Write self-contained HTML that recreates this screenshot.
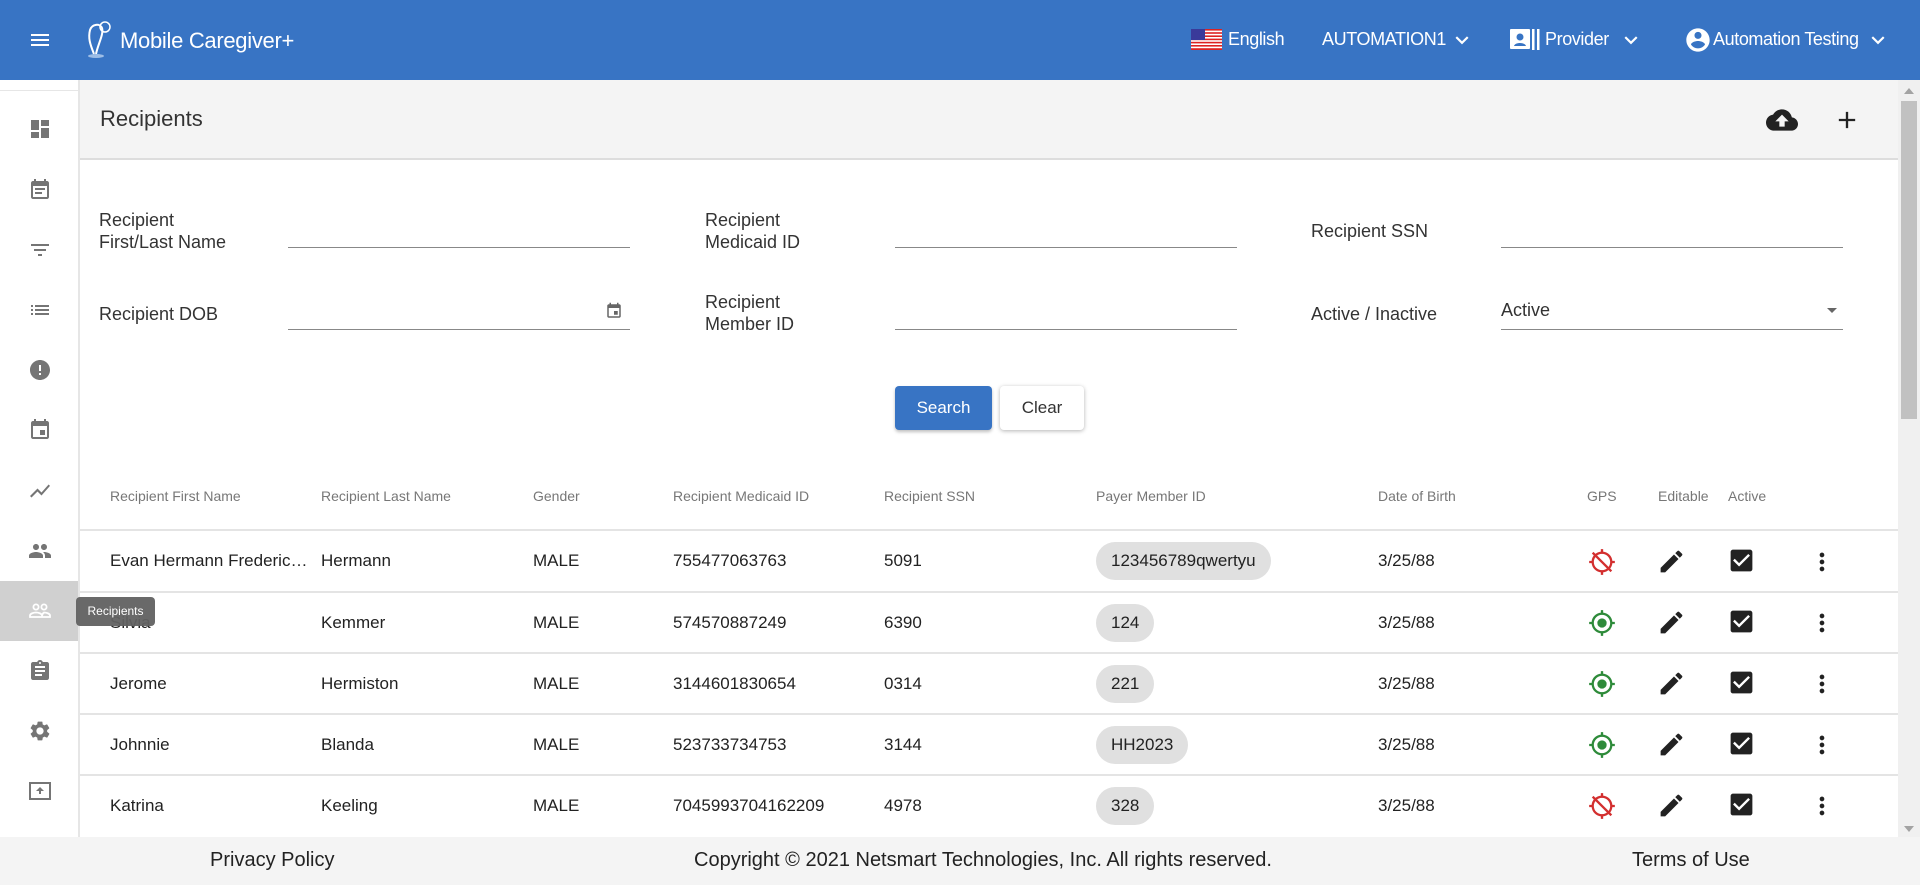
<!DOCTYPE html>
<html><head><meta charset="utf-8"><style>
*{box-sizing:border-box;margin:0;padding:0}
body{width:1920px;height:885px;overflow:hidden;font-family:"Liberation Sans",Arial,sans-serif;background:#fff;position:relative;color:#222}
.a{position:absolute;white-space:nowrap}
.hdr{left:0;top:0;width:1920px;height:80px;background:#3874c4}
.w{color:#fff;font-size:18px;letter-spacing:-0.4px}
.side{left:0;top:80px;width:80px;height:757px;background:#fff;border-right:2px solid #e6e6e6}
.si{position:absolute;left:28px;width:24px;height:24px}
.title{left:80px;top:80px;width:1818px;height:80px;background:#f4f4f4;border-bottom:2px solid #ddd}
.lbl{font-size:18px;color:#333;line-height:22px}
.ul{height:1px;background:#888}
.th{font-size:14px;color:#777;top:488px}
.td{font-size:17px;color:#222}
.line{left:80px;width:1818px;height:2px;background:#e4e4e4}
.chip{background:#e0e0e0;border-radius:19px;height:38px;padding:0 15px;line-height:38px;font-size:17px}
.foot{left:0;top:837px;width:1920px;height:48px;background:#f4f4f4;font-size:20px;color:#222}
</style></head><body>
<div class="a hdr"></div>
<svg class="a" style="left:28px;top:28px" width="24" height="24" viewBox="0 0 24 24"><path d="M3 18h18v-2H3v2zm0-5h18v-2H3v2zm0-7v2h18V6H3z" fill="#fff"/></svg>
<svg class="a" style="left:86px;top:20px" width="26" height="40" viewBox="0 0 26 40"><path d="M8 34 C4 24 2 18 4 10 C6 4 14 3 16 8 C18 14 12 24 10 34" fill="none" stroke="#fff" stroke-width="2"/><circle cx="19" cy="7" r="5" fill="none" stroke="#fff" stroke-width="1.5"/><ellipse cx="10" cy="36" rx="8" ry="2" fill="#9dbde6"/></svg>
<div class="a w" style="left:120px;top:28px;font-size:22px;letter-spacing:-0.3px">Mobile Caregiver+</div>
<svg class="a" style="left:1191px;top:29px" width="31" height="21" viewBox="0 0 31 21"><rect width="31" height="21" fill="#fff"/><g fill="#d22">
<rect y="0" width="31" height="1.6"/><rect y="3.2" width="31" height="1.6"/><rect y="6.4" width="31" height="1.6"/><rect y="9.6" width="31" height="1.6"/><rect y="12.8" width="31" height="1.6"/><rect y="16" width="31" height="1.6"/><rect y="19.2" width="31" height="1.8"/></g><rect width="14" height="11" fill="#3a3a9a"/></svg>
<div class="a w" style="left:1228px;top:29px">English</div>
<div class="a w" style="left:1322px;top:29px">AUTOMATION1</div>
<svg class="a" style="left:1449px;top:27px" width="26" height="26" viewBox="0 0 24 24"><path d="M7.4 8.6 12 13.2l4.6-4.6L18 10l-6 6-6-6z" fill="#fff"/></svg>
<svg class="a" style="left:1510px;top:29px" width="30" height="22" viewBox="0 0 30 22"><rect x="0" y="0" width="20" height="20" rx="1" fill="#fff"/><circle cx="10" cy="8" r="3.5" fill="#3874c4"/><path d="M4 17c1-4 11-4 12 0z" fill="#3874c4"/><rect x="22" y="0" width="2.5" height="21" fill="#fff"/><rect x="27" y="0" width="2.5" height="21" fill="#fff"/></svg>
<div class="a w" style="left:1545px;top:29px">Provider</div>
<svg class="a" style="left:1618px;top:27px" width="26" height="26" viewBox="0 0 24 24"><path d="M7.4 8.6 12 13.2l4.6-4.6L18 10l-6 6-6-6z" fill="#fff"/></svg>
<svg class="a" style="left:1684px;top:26px" width="28" height="28" viewBox="0 0 24 24"><path d="M12 2C6.5 2 2 6.5 2 12s4.5 10 10 10 10-4.5 10-10S17.5 2 12 2zm0 3c1.7 0 3 1.3 3 3s-1.3 3-3 3-3-1.3-3-3 1.3-3 3-3zm0 14.2c-2.5 0-4.7-1.3-6-3.2 0-2 4-3.1 6-3.1s6 1.1 6 3.1c-1.3 1.9-3.5 3.2-6 3.2z" fill="#fff"/></svg>
<div class="a w" style="left:1713px;top:29px">Automation Testing</div>
<svg class="a" style="left:1865px;top:27px" width="26" height="26" viewBox="0 0 24 24"><path d="M7.4 8.6 12 13.2l4.6-4.6L18 10l-6 6-6-6z" fill="#fff"/></svg>

<div class="a side"></div>
<div class="a" style="left:0;top:90px;width:78px;height:1px;background:#e6e6e6"></div>
<div class="a" style="left:0;top:581px;width:78px;height:60px;background:#d0d0d0"></div>
<svg class="si" style="top:117px" viewBox="0 0 24 24"><path d="M3 13h8V3H3v10zm0 8h8v-6H3v6zm10 0h8V11h-8v10zm0-18v6h8V3h-8z" fill="#757575"/></svg>
<svg class="si" style="top:178px" viewBox="0 0 24 24"><path d="M19 3h-1V1h-2v2H8V1H6v2H5c-1.1 0-2 .9-2 2v14c0 1.1.9 2 2 2h14c1.1 0 2-.9 2-2V5c0-1.1-.9-2-2-2zm0 16H5V8h14v11zM7 10h10v2H7zm0 4h7v2H7z" fill="#757575"/></svg>
<svg class="si" style="top:238px" viewBox="0 0 24 24"><path d="M10 18h4v-2h-4v2zM3 6v2h18V6H3zm3 7h12v-2H6v2z" fill="#757575"/></svg>
<svg class="si" style="top:298px" viewBox="0 0 24 24"><path d="M3 13h2v-2H3v2zm0 4h2v-2H3v2zm0-8h2V7H3v2zm4 4h14v-2H7v2zm0 4h14v-2H7v2zM7 7v2h14V7H7z" fill="#757575"/></svg>
<svg class="si" style="top:358px" viewBox="0 0 24 24"><path d="M12 2C6.5 2 2 6.5 2 12s4.5 10 10 10 10-4.5 10-10S17.5 2 12 2zm1 15h-2v-2h2v2zm0-4h-2V7h2v6z" fill="#757575"/></svg>
<svg class="si" style="top:418px" viewBox="0 0 24 24"><path d="M17 12h-5v5h5v-5zM16 1v2H8V1H6v2H5c-1.1 0-2 .9-2 2v14c0 1.1.9 2 2 2h14c1.1 0 2-.9 2-2V5c0-1.1-.9-2-2-2h-1V1h-2zm3 18H5V8h14v11z" fill="#757575"/></svg>
<svg class="si" style="top:479px" viewBox="0 0 24 24"><path d="M3.5 18.5 9.5 12.5l4 4L22 6.9l-1.4-1.4-7.1 8-4-4L2 17z" fill="#757575"/></svg>
<svg class="si" style="top:539px" viewBox="0 0 24 24"><path d="M16 11c1.7 0 3-1.3 3-3s-1.3-3-3-3-3 1.3-3 3 1.3 3 3 3zm-8 0c1.7 0 3-1.3 3-3S9.7 5 8 5 5 6.3 5 8s1.3 3 3 3zm0 2c-2.3 0-7 1.2-7 3.5V19h14v-2.5C15 14.2 10.3 13 8 13zm8 0c-.3 0-.6 0-1 .1 1.2.8 2 2 2 3.4V19h6v-2.5c0-2.3-4.7-3.5-7-3.5z" fill="#757575"/></svg>
<svg class="si" style="top:599px" viewBox="0 0 24 24"><circle cx="8" cy="8" r="2.6" fill="none" stroke="#fff" stroke-width="1.8"/><circle cx="16" cy="8" r="2.6" fill="none" stroke="#fff" stroke-width="1.8"/><path d="M2 18v-1.5c0-2 4-3 6-3s6 1 6 3V18zM14 17c0-2 2-3.5 2-3.5 2 0 6 1 6 3V18h-8" fill="none" stroke="#fff" stroke-width="1.8"/></svg>
<svg class="si" style="top:659px" viewBox="0 0 24 24"><path d="M19 3h-4.2C14.4 1.8 13.3 1 12 1s-2.4.8-2.8 2H5c-1.1 0-2 .9-2 2v14c0 1.1.9 2 2 2h14c1.1 0 2-.9 2-2V5c0-1.1-.9-2-2-2zm-7 0c.6 0 1 .4 1 1s-.4 1-1 1-1-.4-1-1 .4-1 1-1zm2 14H7v-2h7v2zm3-4H7v-2h10v2zm0-4H7V7h10v2z" fill="#757575"/></svg>
<svg class="si" style="top:719px" viewBox="0 0 24 24"><path d="M19.1 12.9c0-.3.1-.6.1-.9s0-.6-.1-.9l2-1.6c.2-.1.2-.4.1-.6l-1.9-3.3c-.1-.2-.4-.3-.6-.2l-2.4 1c-.5-.4-1-.7-1.6-.9L14.4 3c0-.2-.2-.4-.5-.4h-3.8c-.2 0-.4.2-.5.4l-.4 2.5c-.6.2-1.1.6-1.6.9l-2.4-1c-.2-.1-.5 0-.6.2L2.7 8.9c-.1.2-.1.5.1.6l2 1.6c0 .3-.1.6-.1.9s0 .6.1.9l-2 1.6c-.2.1-.2.4-.1.6l1.9 3.3c.1.2.4.3.6.2l2.4-1c.5.4 1 .7 1.6.9l.4 2.5c0 .2.2.4.5.4h3.8c.2 0 .4-.2.5-.4l.4-2.5c.6-.2 1.1-.6 1.6-.9l2.4 1c.2.1.5 0 .6-.2l1.9-3.3c.1-.2.1-.5-.1-.6l-2-1.6zM12 15.6c-2 0-3.6-1.6-3.6-3.6S10 8.4 12 8.4s3.6 1.6 3.6 3.6-1.6 3.6-3.6 3.6z" fill="#757575"/></svg>
<svg class="si" style="top:779px" viewBox="0 0 24 24"><rect x="2" y="4" width="20" height="16" fill="none" stroke="#757575" stroke-width="2"/><path d="M12 8l-4 4h3v3h2v-3h3z" fill="#757575"/></svg>

<div class="a title"></div>
<div class="a" style="left:100px;top:106px;font-size:22px;color:#333">Recipients</div>
<svg class="a" style="left:1766px;top:104px" width="32" height="32" viewBox="0 0 24 24"><path d="M19.4 10c-.7-3.4-3.7-6-7.4-6-2.9 0-5.4 1.6-6.7 4C2.3 8.4 0 10.9 0 14c0 3.3 2.7 6 6 6h13c2.8 0 5-2.2 5-5 0-2.6-2.1-4.8-4.6-5zM14 13v4h-4v-4H7l5-5 5 5h-3z" fill="#222"/></svg>
<svg class="a" style="left:1833px;top:106px" width="28" height="28" viewBox="0 0 24 24"><path d="M19 13h-6v6h-2v-6H5v-2h6V5h2v6h6v2z" fill="#222"/></svg>

<div class="a lbl" style="left:99px;top:209px">Recipient<br>First/Last Name</div>
<div class="a ul" style="left:288px;top:247px;width:342px"></div>
<div class="a lbl" style="left:705px;top:209px">Recipient<br>Medicaid ID</div>
<div class="a ul" style="left:895px;top:247px;width:342px"></div>
<div class="a lbl" style="left:1311px;top:220px">Recipient SSN</div>
<div class="a ul" style="left:1501px;top:247px;width:342px"></div>
<div class="a lbl" style="left:99px;top:303px">Recipient DOB</div>
<div class="a ul" style="left:288px;top:329px;width:342px"></div>
<svg class="a" style="left:605px;top:302px" width="18" height="18" viewBox="0 0 24 24"><path d="M17 12h-5v5h5v-5zM16 1v2H8V1H6v2H5c-1.1 0-2 .9-2 2v14c0 1.1.9 2 2 2h14c1.1 0 2-.9 2-2V5c0-1.1-.9-2-2-2h-1V1h-2zm3 18H5V8h14v11z" fill="#666"/></svg>
<div class="a lbl" style="left:705px;top:291px">Recipient<br>Member ID</div>
<div class="a ul" style="left:895px;top:329px;width:342px"></div>
<div class="a lbl" style="left:1311px;top:303px">Active / Inactive</div>
<div class="a lbl" style="left:1501px;top:299px">Active</div>
<div class="a ul" style="left:1501px;top:329px;width:342px"></div>
<svg class="a" style="left:1820px;top:298px" width="24" height="24" viewBox="0 0 24 24"><path d="M7 10l5 5 5-5z" fill="#666"/></svg>
<div class="a" style="left:895px;top:386px;width:97px;height:44px;background:#3874c4;border-radius:4px;color:#fff;font-size:17px;text-align:center;line-height:44px;box-shadow:0 2px 3px rgba(0,0,0,.25)">Search</div>
<div class="a" style="left:1000px;top:386px;width:84px;height:44px;background:#fff;border-radius:4px;color:#333;font-size:17px;text-align:center;line-height:44px;box-shadow:0 1px 4px rgba(0,0,0,.3)">Clear</div>

<div class="a th" style="left:110px">Recipient First Name</div>
<div class="a th" style="left:321px">Recipient Last Name</div>
<div class="a th" style="left:533px">Gender</div>
<div class="a th" style="left:673px">Recipient Medicaid ID</div>
<div class="a th" style="left:884px">Recipient SSN</div>
<div class="a th" style="left:1096px">Payer Member ID</div>
<div class="a th" style="left:1378px">Date of Birth</div>
<div class="a th" style="left:1587px">GPS</div>
<div class="a th" style="left:1658px">Editable</div>
<div class="a th" style="left:1728px">Active</div>

<div class="a line" style="top:529px"></div>
<div class="a line" style="top:591px"></div>
<div class="a line" style="top:652px"></div>
<div class="a line" style="top:713px"></div>
<div class="a line" style="top:774px"></div>

<div class="a td" style="left:110px;top:551px">Evan Hermann Frederic…</div><div class="a td" style="left:321px;top:551px">Hermann</div><div class="a td" style="left:533px;top:551px">MALE</div><div class="a td" style="left:673px;top:551px">755477063763</div><div class="a td" style="left:884px;top:551px">5091</div><div class="a chip" style="left:1096px;top:542px">123456789qwertyu</div><div class="a td" style="left:1378px;top:551px">3/25/88</div>
<div class="a td" style="left:110px;top:613px">Silvia</div><div class="a td" style="left:321px;top:613px">Kemmer</div><div class="a td" style="left:533px;top:613px">MALE</div><div class="a td" style="left:673px;top:613px">574570887249</div><div class="a td" style="left:884px;top:613px">6390</div><div class="a chip" style="left:1096px;top:604px">124</div><div class="a td" style="left:1378px;top:613px">3/25/88</div>
<div class="a td" style="left:110px;top:674px">Jerome</div><div class="a td" style="left:321px;top:674px">Hermiston</div><div class="a td" style="left:533px;top:674px">MALE</div><div class="a td" style="left:673px;top:674px">3144601830654</div><div class="a td" style="left:884px;top:674px">0314</div><div class="a chip" style="left:1096px;top:665px">221</div><div class="a td" style="left:1378px;top:674px">3/25/88</div>
<div class="a td" style="left:110px;top:735px">Johnnie</div><div class="a td" style="left:321px;top:735px">Blanda</div><div class="a td" style="left:533px;top:735px">MALE</div><div class="a td" style="left:673px;top:735px">523733734753</div><div class="a td" style="left:884px;top:735px">3144</div><div class="a chip" style="left:1096px;top:726px">HH2023</div><div class="a td" style="left:1378px;top:735px">3/25/88</div>
<div class="a td" style="left:110px;top:796px">Katrina</div><div class="a td" style="left:321px;top:796px">Keeling</div><div class="a td" style="left:533px;top:796px">MALE</div><div class="a td" style="left:673px;top:796px">7045993704162209</div><div class="a td" style="left:884px;top:796px">4978</div><div class="a chip" style="left:1096px;top:787px">328</div><div class="a td" style="left:1378px;top:796px">3/25/88</div>

<svg width="0" height="0" style="position:absolute"><defs>
<g id="gon"><circle cx="12" cy="12" r="4" fill="#2e8b3a"/><path d="M20.9 11C20.5 6.8 17.2 3.5 13 3.1V1h-2v2.1C6.8 3.5 3.5 6.8 3.1 11H1v2h2.1c.5 4.2 3.8 7.5 7.9 7.9V23h2v-2.1c4.2-.5 7.5-3.8 7.9-7.9H23v-2h-2.1zM12 19c-3.9 0-7-3.1-7-7s3.1-7 7-7 7 3.1 7 7-3.1 7-7 7z" fill="#2e8b3a"/></g>
<g id="goff"><path d="M20.9 11C20.5 6.8 17.2 3.5 13 3.1V1h-2v2.1C6.8 3.5 3.5 6.8 3.1 11H1v2h2.1c.5 4.2 3.8 7.5 7.9 7.9V23h2v-2.1c4.2-.5 7.5-3.8 7.9-7.9H23v-2h-2.1zM12 19c-3.9 0-7-3.1-7-7s3.1-7 7-7 7 3.1 7 7-3.1 7-7 7z" fill="#d32f2f"/><path d="M4 4l16 16" stroke="#d32f2f" stroke-width="2"/></g>
<g id="pen"><path d="M3 17.25V21h3.75L17.8 9.94l-3.75-3.75L3 17.25zM20.7 7.04c.4-.4.4-1 0-1.41l-2.34-2.34c-.4-.4-1-.4-1.41 0l-1.83 1.83 3.750 3.75 1.83-1.83z" fill="#222"/></g>
<g id="chk"><path d="M19 3H5c-1.1 0-2 .9-2 2v14c0 1.1.9 2 2 2h14c1.1 0 2-.9 2-2V5c0-1.1-.9-2-2-2zm-9 14l-5-5 1.4-1.4 3.6 3.6 7.6-7.6L19 8l-9 9z" fill="#222"/></g>
<g id="dots"><path d="M12 8c1.1 0 2-.9 2-2s-.9-2-2-2-2 .9-2 2 .9 2 2 2zm0 2c-1.1 0-2 .9-2 2s.9 2 2 2 2-.9 2-2-.9-2-2-2zm0 6c-1.1 0-2 .9-2 2s.9 2 2 2 2-.9 2-2-.9-2-2-2z" fill="#222"/></g>
</defs></svg>
<svg class="a" style="left:1588px;top:548px" width="28" height="28" viewBox="0 0 24 24"><use href="#goff"/></svg>
<svg class="a" style="left:1588px;top:609px" width="28" height="28" viewBox="0 0 24 24"><use href="#gon"/></svg>
<svg class="a" style="left:1588px;top:670px" width="28" height="28" viewBox="0 0 24 24"><use href="#gon"/></svg>
<svg class="a" style="left:1588px;top:731px" width="28" height="28" viewBox="0 0 24 24"><use href="#gon"/></svg>
<svg class="a" style="left:1588px;top:792px" width="28" height="28" viewBox="0 0 24 24"><use href="#goff"/></svg>
<svg class="a" style="left:1657px;top:547px" width="29" height="29" viewBox="0 0 24 24"><use href="#pen"/></svg>
<svg class="a" style="left:1657px;top:608px" width="29" height="29" viewBox="0 0 24 24"><use href="#pen"/></svg>
<svg class="a" style="left:1657px;top:669px" width="29" height="29" viewBox="0 0 24 24"><use href="#pen"/></svg>
<svg class="a" style="left:1657px;top:730px" width="29" height="29" viewBox="0 0 24 24"><use href="#pen"/></svg>
<svg class="a" style="left:1657px;top:791px" width="29" height="29" viewBox="0 0 24 24"><use href="#pen"/></svg>
<svg class="a" style="left:1727px;top:546px" width="29" height="29" viewBox="0 0 24 24"><use href="#chk"/></svg>
<svg class="a" style="left:1727px;top:607px" width="29" height="29" viewBox="0 0 24 24"><use href="#chk"/></svg>
<svg class="a" style="left:1727px;top:668px" width="29" height="29" viewBox="0 0 24 24"><use href="#chk"/></svg>
<svg class="a" style="left:1727px;top:729px" width="29" height="29" viewBox="0 0 24 24"><use href="#chk"/></svg>
<svg class="a" style="left:1727px;top:790px" width="29" height="29" viewBox="0 0 24 24"><use href="#chk"/></svg>
<svg class="a" style="left:1808px;top:548px" width="28" height="28" viewBox="0 0 24 24"><use href="#dots"/></svg>
<svg class="a" style="left:1808px;top:609px" width="28" height="28" viewBox="0 0 24 24"><use href="#dots"/></svg>
<svg class="a" style="left:1808px;top:670px" width="28" height="28" viewBox="0 0 24 24"><use href="#dots"/></svg>
<svg class="a" style="left:1808px;top:731px" width="28" height="28" viewBox="0 0 24 24"><use href="#dots"/></svg>
<svg class="a" style="left:1808px;top:792px" width="28" height="28" viewBox="0 0 24 24"><use href="#dots"/></svg>

<div class="a" style="left:76px;top:597px;width:79px;height:29px;background:rgba(97,97,97,.95);border-radius:4px;color:#fff;font-size:12px;line-height:29px;text-align:center">Recipients</div>

<div class="a" style="left:1898px;top:80px;width:22px;height:757px;background:#f0f0f0"></div>
<div class="a" style="left:1901px;top:101px;width:16px;height:318px;background:#c1c1c1"></div>
<svg class="a" style="left:1904px;top:86px" width="10" height="8"><path d="M0 8L5 2 10 8z" fill="#a3a3a3"/></svg>
<svg class="a" style="left:1904px;top:826px" width="10" height="8"><path d="M0 0L5 6 10 0z" fill="#a3a3a3"/></svg>

<div class="a foot"></div>
<div class="a" style="left:210px;top:849px;font-size:20px">Privacy Policy</div>
<div class="a" style="left:694px;top:849px;font-size:20px">Copyright © 2021 Netsmart Technologies, Inc. All rights reserved.</div>
<div class="a" style="left:1632px;top:849px;font-size:20px">Terms of Use</div>
</body></html>
